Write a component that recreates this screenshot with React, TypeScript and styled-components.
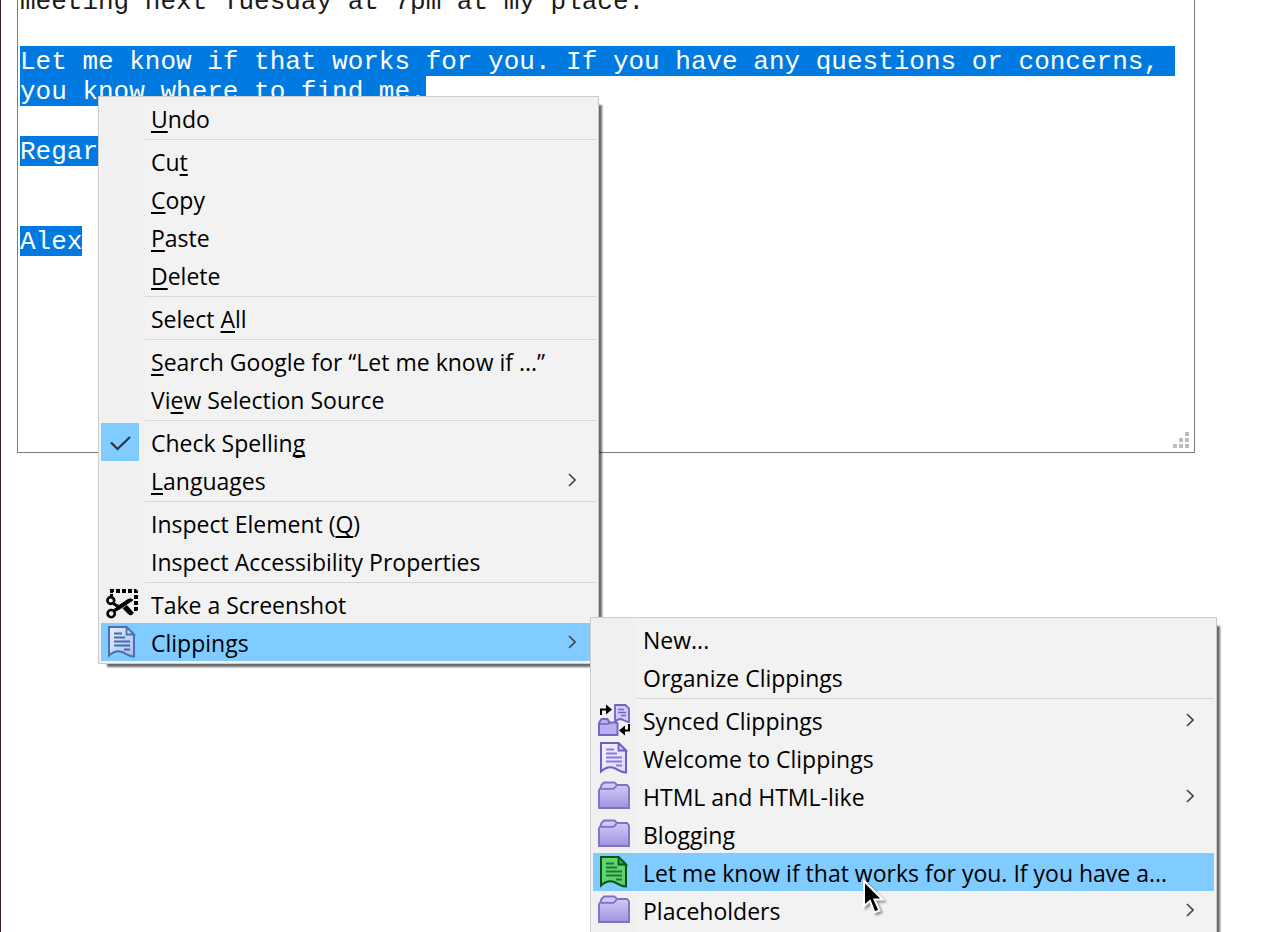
import React, { useEffect, useRef } from "react";
import styled, { createGlobalStyle } from "styled-components";

const GlobalStyle = createGlobalStyle`
  *, *::before, *::after { box-sizing: border-box; }
  body { margin: 0; background: #fff; }
`;

const Page = styled.main`
  position: relative;
  height: 100vh;
  overflow: hidden;
  border-left: 1px solid #3b1f1f;
  padding: 0 91px 0 16px;
`;

const Editor = styled.div`
  position: relative;
  height: 469px;
  margin-top: -16px;
  font: 26px/30px "Liberation Mono", "Courier New", monospace;
`;

const TextBox = styled.textarea`
  position: relative;
  display: block;
  width: 100%;
  height: 100%;
  resize: none;
  overflow: hidden;
  outline: none;
  border: 1px solid #7a7a7a;
  border-radius: 0;
  margin: 0;
  padding: 2px;
  background: transparent;
  color: #1a1a1a;
  font: inherit;

  &::selection {
    background: transparent;
    color: #fff;
  }
`;

const Highlights = styled.div`
  position: absolute;
  inset: 0;
  padding: 62px 3px 0;
`;

const Highlight = styled.div<{ $chars: number }>`
  width: ${(p) => p.$chars}ch;
  height: 30px;
  background: #007ae0;
`;

const Grip = styled.svg`
  position: absolute;
  right: 6px;
  bottom: 5px;
`;

const Menu = styled.div`
  position: absolute;
  z-index: 1;
  border: 1px solid #ccc;
  padding: 2px;
  background: linear-gradient(to right, #f2f2f2 2px, #f0f0f0 2px, #f0f0f0 46px, #f2f2f2 46px);
  box-shadow: 6px 6px 2px -3px rgba(0, 0, 0, 0.6);
`;

const ContextMenu = styled(Menu)`
  left: 97px;
  top: 96px;
  width: 501px;
`;

const SubMenu = styled(Menu)`
  left: calc(100% - 6px);
  top: -6px;
  width: 627px;
  padding-bottom: 40px;
`;

const Holder = styled.div`
  position: relative;
`;

const Item = styled.button<{ $active?: boolean }>`
  display: flex;
  align-items: center;
  width: 100%;
  height: 38px;
  margin: 0;
  padding: 0 20px 0 0;
  border: 0;
  background: ${(p) => (p.$active ? "#80cbff" : "transparent")};
  color: #000;
  font: 23px/36px "Open Sans", "Segoe UI", sans-serif;
  text-align: left;
  white-space: nowrap;
`;

const IconSlot = styled.span<{ $checked?: boolean }>`
  display: flex;
  flex: none;
  align-items: center;
  justify-content: center;
  width: 38px;
  height: 38px;
  margin-right: 12px;
  padding-left: 4px;
  background: ${(p) => (p.$checked ? "#80cbff" : "transparent")};
`;

const Label = styled.span`
  flex: 1;
  padding-top: 2px;
`;

const Key = styled.u`
  text-decoration-thickness: 2px;
  text-underline-offset: 3px;
  text-decoration-skip-ink: none;
`;

const Separator = styled.hr`
  height: 1px;
  margin: 2px 0 2px 44px;
  border: 0;
  background: #d6d6d6;
`;

const Pointer = styled.svg`
  position: absolute;
  z-index: 2;
  left: 860px;
  top: 877px;
  filter: drop-shadow(2px 2px 1px rgba(0, 0, 0, 0.4));
`;

const Svg = ({ children }: { children: React.ReactNode }) => (
  <svg width="32" height="32" viewBox="0 0 32 32" aria-hidden="true">
    {children}
  </svg>
);

const CheckIcon = () => (
  <Svg>
    <path d="M5 16.5 11.5 23 24 11" fill="none" stroke="#333" strokeWidth="2.3" />
  </Svg>
);

const ScissorsIcon = () => (
  <Svg>
    <path
      d="M4 1h4v3H7v1H4zM10 1h4v4h-4zM16 1h4v4h-4zM22 1h4v4h-4zM28 1h2l2 2v2h-4zM28 7h4v4h-4zM28 13h4v4h-4zM28 19h4v3l-1 1h-3zM4 6h3v3H4z"
      fill="#000"
    />
    <circle cx="4.8" cy="12.5" r="3.4" fill="none" stroke="#000" strokeWidth="2.6" />
    <circle cx="5.2" cy="25.6" r="3.6" fill="none" stroke="#000" strokeWidth="2.6" />
    <path d="M7 14.5 13 17.5 22 11.5Q24.5 10 27 12L14.5 20.5 8 24 7 22 11 19.5 6.5 16z" fill="#000" stroke="#000" strokeWidth="1" />
    <path d="M17 20.5 21 17.5 27.5 25Q25 28.5 22.5 26z" fill="#000" stroke="#000" strokeWidth="0.8" />
  </Svg>
);

const Clipping = ({ line, fill, ink, fold, id }: { line: string; fill: string[]; ink: string; fold: string; id: string }) => (
  <Svg>
    <defs>
      <linearGradient id={id} x1="0" y1="0" x2="1" y2="1">
        <stop offset="0" stopColor={fill[0]} />
        <stop offset="1" stopColor={fill[1]} />
      </linearGradient>
    </defs>
    <path
      d="M3 1H20.5L28 8.5V30.5C23 31 20 27.5 15.5 25.8C11 24.5 7 26 3 29.5z"
      fill={`url(#${id})`}
      stroke={line}
      strokeWidth="2"
    />
    <path d="M20.5 1V8.5H28z" fill={fold} stroke={line} strokeWidth="1.8" />
    <path d="M8 7.5h8M8 11.5h11M8 15.5h16M8 19.5h16M18 23.5h6" stroke={ink} strokeWidth="1.8" />
  </Svg>
);

const FolderIcon = ({ id }: { id: string }) => (
  <Svg>
    <defs>
      <linearGradient id={id} x1="0" y1="0" x2="0" y2="1">
        <stop offset="0" stopColor="#d7cffb" />
        <stop offset="1" stopColor="#9e93dd" />
      </linearGradient>
    </defs>
    <path
      d="M1 28V10L2.5 8.2 3.5 5 6 2.5H16.5L19 5H29L31 7.5V28z"
      fill={`url(#${id})`}
      stroke="#8270c2"
      strokeWidth="1.9"
    />
    <path d="M3 8.8H15.5L18.5 6" fill="none" stroke="#8270c2" strokeWidth="1.8" />
  </Svg>
);

const SyncIcon = () => (
  <Svg>
    <path d="M3 11V5.5H9" fill="none" stroke="#000" strokeWidth="2" />
    <path d="M8 0.5 14 5.5 8 10.5z" fill="#000" />
    <path
      d="M17 1H27.5L31 4.5V18C28 18 25.5 15.5 22.5 15C20 15 19 16 17 17.5z"
      fill="#d3cbfa"
      stroke="#7363c4"
      strokeWidth="1.8"
    />
    <path d="M20 5.5h6M20 8.5h8M23 11.5h5" stroke="#7363c4" strokeWidth="1.6" />
    <path d="M1 31V19L3.5 15H9.5L11.5 18.5H18.5L19.5 19.5V31z" fill="#b9b0ee" stroke="#7363c4" strokeWidth="1.9" />
    <path d="M2 20H10L12 18.5" fill="none" stroke="#7363c4" strokeWidth="1.6" />
    <path d="M31 20V26.5H26" fill="none" stroke="#000" strokeWidth="2" />
    <path d="M27 21.5 21 26.5 27 31.5z" fill="#000" />
  </Svg>
);

const Chevron = () => (
  <svg width="8" height="14" viewBox="0 0 8 14" aria-hidden="true">
    <path d="M1 1 7 7 1 13" fill="none" stroke="#444" strokeWidth="1.6" />
  </svg>
);

const message = [
  "meeting next Tuesday at 7pm at my place.",
  "",
  "Let me know if that works for you. If you have any questions or concerns, you know where to find me.",
  "",
  "Regards,",
  "",
  "",
  "Alex",
].join("\n");

// Selected characters on each wrapped line, so empty lines stay unmarked.
const selectedChars = [74, 26, 0, 8, 0, 0, 4];

type EntryProps = {
  children: React.ReactNode;
  icon?: React.ReactNode;
  active?: boolean;
  checked?: boolean;
  more?: boolean;
};

const Entry = ({ children, icon, active, checked, more }: EntryProps) => (
  <Item
    type="button"
    role={checked ? "menuitemcheckbox" : "menuitem"}
    aria-checked={checked}
    aria-haspopup={more ? "menu" : undefined}
    $active={active}
  >
    <IconSlot $checked={checked}>{icon}</IconSlot>
    <Label>{children}</Label>
    {more && <Chevron />}
  </Item>
);

export default function App() {
  const box = useRef<HTMLTextAreaElement>(null);

  useEffect(() => {
    box.current?.focus({ preventScroll: true });
    box.current?.setSelectionRange(message.indexOf("Let me"), message.length);
  }, []);

  return (
    <Page>
      <GlobalStyle />
      <Editor>
        <Highlights aria-hidden="true">
          {selectedChars.map((chars, line) => (
            <Highlight key={line} $chars={chars} />
          ))}
        </Highlights>
        <TextBox ref={box} aria-label="Message" spellCheck={false} defaultValue={message} />
        <Grip width="16" height="16" fill="#bdbdbd" aria-hidden="true">
          <path d="M12 0h4v4h-4zM6 6h4v4H6zM12 6h4v4h-4zM0 12h4v4H0zM6 12h4v4H6zM12 12h4v4h-4z" />
        </Grip>
      </Editor>

      <ContextMenu role="menu" aria-label="Edit">
        <Entry><Key>U</Key>ndo</Entry>
        <Separator />
        <Entry>Cu<Key>t</Key></Entry>
        <Entry><Key>C</Key>opy</Entry>
        <Entry><Key>P</Key>aste</Entry>
        <Entry><Key>D</Key>elete</Entry>
        <Separator />
        <Entry>Select <Key>A</Key>ll</Entry>
        <Separator />
        <Entry><Key>S</Key>earch Google for “Let me know if ...”</Entry>
        <Entry>Vi<Key>e</Key>w Selection Source</Entry>
        <Separator />
        <Entry checked icon={<CheckIcon />}>Check Spellin<Key>g</Key></Entry>
        <Entry more><Key>L</Key>anguages</Entry>
        <Separator />
        <Entry>Inspect Element (<Key>Q</Key>)</Entry>
        <Entry>Inspect Accessibility Properties</Entry>
        <Separator />
        <Entry icon={<ScissorsIcon />}>Take a Screenshot</Entry>
        <Holder>
          <Entry active more icon={<Clipping id="blue" line="#4a6fb3" fill={["#e6f0fc", "#a3bfe8"]} ink="#4668ae" fold="#c3d7f3" />}>
            Clippings
          </Entry>
          <SubMenu role="menu" aria-label="Clippings">
            <Entry>New...</Entry>
            <Entry>Organize Clippings</Entry>
            <Separator />
            <Entry more icon={<SyncIcon />}>Synced Clippings</Entry>
            <Entry icon={<Clipping id="violet" line="#6f5ec4" fill={["#f4f1ff", "#ded8fa"]} ink="#8c78e0" fold="#d3cbfa" />}>
              Welcome to Clippings
            </Entry>
            <Entry more icon={<FolderIcon id="folder-html" />}>HTML and HTML-like</Entry>
            <Entry icon={<FolderIcon id="folder-blog" />}>Blogging</Entry>
            <Entry active icon={<Clipping id="green" line="#0b5215" fill={["#62d873", "#5ace6b"]} ink="#1d7a2b" fold="#35b44a" />}>
              Let me know if that works for you. If you have a...
            </Entry>
            <Entry more icon={<FolderIcon id="folder-place" />}>Placeholders</Entry>
          </SubMenu>
        </Holder>
      </ContextMenu>

      <Pointer width="26" height="42" viewBox="0 0 26 42" aria-hidden="true">
        <path
          d="M3 4V29L9 24L13.5 35.5L18.5 33.5L13.5 22.5H21.5z"
          fill="#000"
          stroke="#fff"
          strokeWidth="2"
        />
      </Pointer>
    </Page>
  );
}
